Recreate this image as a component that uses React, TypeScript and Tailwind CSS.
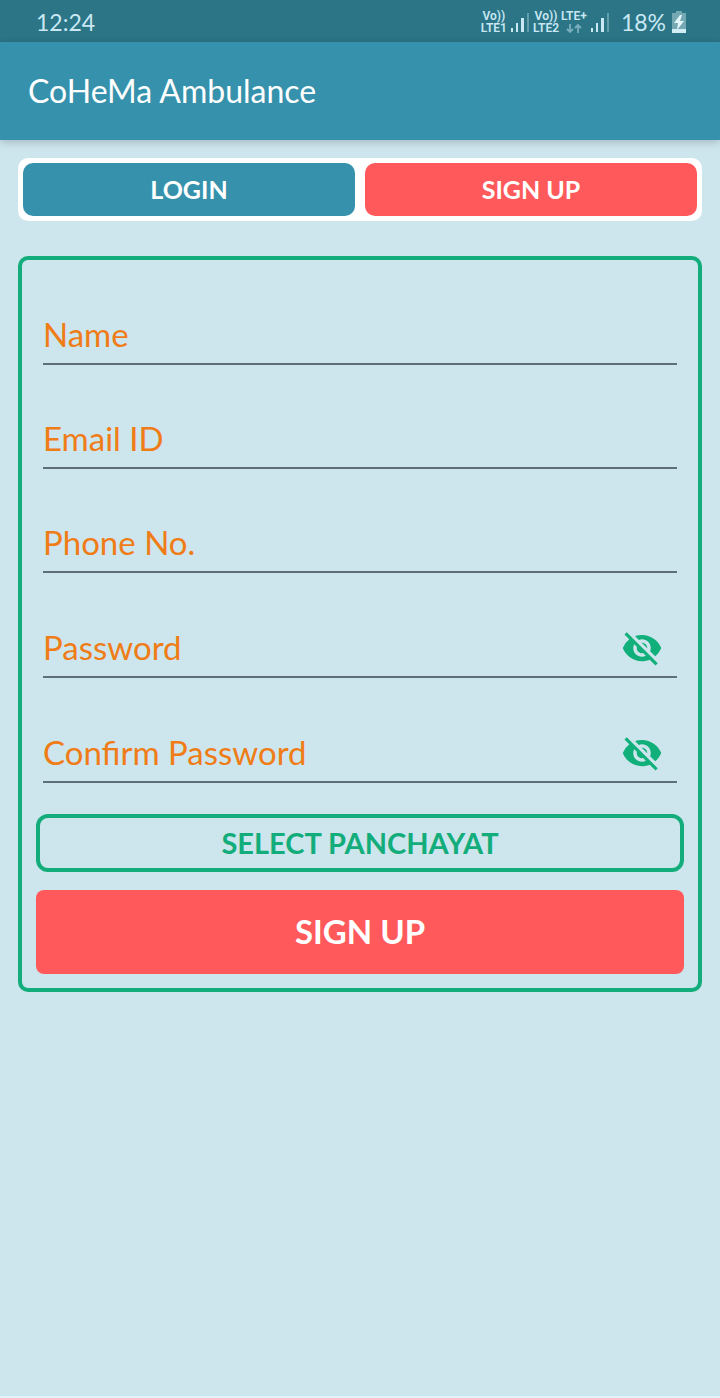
import { useState } from "react";
import { MdVisibilityOff } from "react-icons/md";

type Field = {
  id: string;
  label: string;
  type: "text" | "email" | "tel" | "password";
};

const fields: Field[] = [
  { id: "name", label: "Name", type: "text" },
  { id: "email", label: "Email ID", type: "email" },
  { id: "phone", label: "Phone No.", type: "tel" },
  { id: "password", label: "Password", type: "password" },
  { id: "confirm", label: "Confirm Password", type: "password" },
];

function SignalIcon() {
  return (
    <svg viewBox="0 0 18 20" className="h-5 w-[18px]" fill="currentColor" aria-hidden="true">
      <rect x="0" y="16" width="2" height="4" />
      <rect x="5" y="11" width="2" height="9" />
      <rect x="10" y="6" width="3" height="14" />
      <rect x="16" y="1" width="2" height="19" opacity="0.35" />
    </svg>
  );
}

function DataArrows() {
  return (
    <svg viewBox="0 0 16 9" className="h-[9px] w-4 opacity-50" fill="none" stroke="currentColor" strokeWidth="1.8" aria-hidden="true">
      <path d="M4 0v8M1 5l3 3 3-3M12 9V1M9 4l3-3 3 3" />
    </svg>
  );
}

function BatteryIcon() {
  return (
    <svg viewBox="0 0 14 22" className="h-[22px] w-[14px]" aria-hidden="true">
      <path d="M4 0h6v2h4v20H0V2h4z" fill="#74a9b4" />
      <path d="M0 18h14v4H0z" fill="#d3edf5" />
      <path d="M8 4L2 12h4l-1 7 7-9H8l2-6z" fill="#e4f5fa" />
    </svg>
  );
}

function StatusBar() {
  return (
    <div className="flex h-[42px] items-center justify-between bg-[#2b7586] pt-[2px] pr-[34px] pl-9 text-[#c9e8f4]">
      <span className="text-[23px]">12:24</span>
      <div className="flex items-center">
        <div className="text-center font-[Roboto] text-xs leading-3 font-semibold">
          <div>Vo))</div>
          <div>LTE1</div>
        </div>
        <div className="ml-1">
          <SignalIcon />
        </div>
        <div className="ml-1 text-center font-[Roboto] text-xs leading-3 font-semibold">
          <div>Vo))</div>
          <div>LTE2</div>
        </div>
        <div className="ml-[2px] flex flex-col items-center font-[Roboto] text-xs leading-3 font-semibold">
          <div>LTE+</div>
          <div className="flex h-3 items-center">
            <DataArrows />
          </div>
        </div>
        <div className="ml-1">
          <SignalIcon />
        </div>
        <span className="mr-[6px] ml-3 text-[23px]">18%</span>
        <BatteryIcon />
      </div>
    </div>
  );
}

function FormField({ field }: { field: Field }) {
  const [visible, setVisible] = useState(false);
  const isPassword = field.type === "password";

  return (
    <div className={isPassword ? "mx-[7px] flex h-[105px] items-end border-b-2 border-[#5d7078]" : "mx-[7px] flex h-[104px] items-end border-b-2 border-[#5d7078]"}>
      <input
        id={field.id}
        aria-label={field.label}
        type={isPassword && visible ? "text" : field.type}
        placeholder={field.label}
        className="h-[58px] min-w-0 flex-1 bg-transparent text-[33px] text-[#f07c17] outline-none placeholder:text-[#f07c17] placeholder:opacity-100"
      />
      {isPassword && (
        <button
          type="button"
          aria-label={`Show ${field.label.toLowerCase()}`}
          onClick={() => setVisible(!visible)}
          className="mr-[11px] mb-1 flex size-12 items-center justify-center text-[#11b07a]"
        >
          <MdVisibilityOff className="size-[42px]" />
        </button>
      )}
    </div>
  );
}

export default function App() {
  return (
    <div className="flex min-h-screen flex-col border-b-2 border-[#e3f2fb] bg-[#cde5ec] font-[Lato,sans-serif]">
      <StatusBar />
      <header className="flex h-[98px] items-center bg-[#3692ac] px-7 shadow-[0_2px_8px_rgba(0,0,0,0.2)]">
        <h1 className="text-[32px] text-white">CoHeMa Ambulance</h1>
      </header>

      <main className="px-[18px] pt-[18px]">
        <div className="grid grid-cols-2 gap-[10px] rounded-[10px] bg-white p-[5px] text-[25px] font-bold text-white">
          <button type="button" className="h-[53px] rounded-[10px] bg-[#3692ac]">
            LOGIN
          </button>
          <button type="button" className="h-[53px] rounded-[10px] bg-[#ff595b]">
            SIGN UP
          </button>
        </div>

        <form
          className="mt-[35px] flex flex-col rounded-[10px] border-4 border-[#12ad7a] px-[14px] pt-px pb-[14px]"
          onSubmit={(event) => event.preventDefault()}
        >
          {fields.map((field) => (
            <FormField key={field.id} field={field} />
          ))}
          <button
            type="button"
            className="mt-[31px] h-[58px] rounded-xl border-4 border-[#12ad7a] text-[29px] font-bold text-[#12ad7a]"
          >
            SELECT PANCHAYAT
          </button>
          <button type="submit" className="mt-[18px] h-[84px] rounded-lg bg-[#ff595b] text-[33px] font-bold text-white">
            SIGN UP
          </button>
        </form>
      </main>
    </div>
  );
}
